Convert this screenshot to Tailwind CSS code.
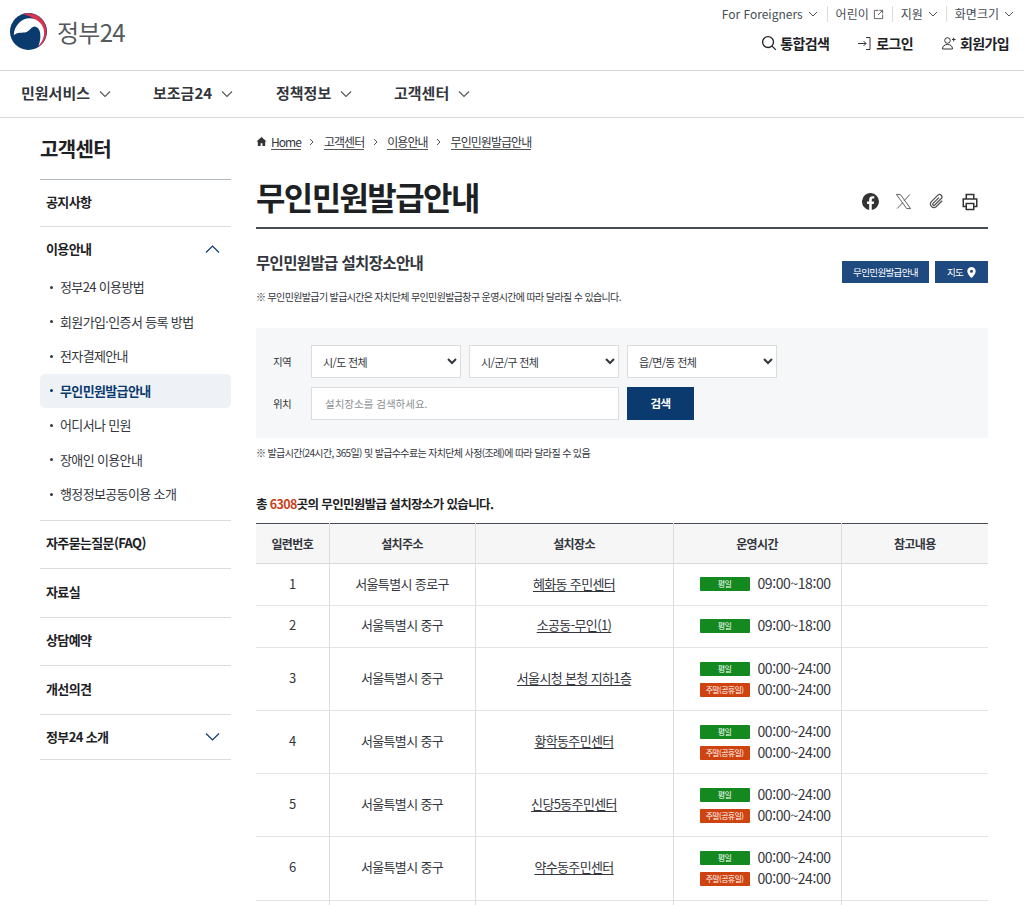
<!DOCTYPE html>
<html lang="ko">
<head>
    <meta charset="UTF-8">
    <meta name="viewport" content="width=device-width, initial-scale=1.0">
    <title>무인민원발급안내 - 정부24</title>
    <script src="https://cdn.jsdelivr.net/npm/@tailwindcss/browser@4"></script>
</head>
<body class="bg-white">
<div class="h-[905px] overflow-hidden font-['Noto_Sans_CJK_KR','Noto_Sans',sans-serif] text-[#1e2124] tracking-[-0.04em]">

    <!-- Top header -->
    <header class="h-[71px] border-b border-[#d6d6d6] flex justify-between pl-[9px] pr-[15px]">
        <div class="flex items-center gap-[9px] pb-[7px]">
            <svg class="w-[39px] h-[39px]" viewBox="0 0 40 40">
                <circle cx="20" cy="20" r="19" fill="#0b3a6e"/>
                <path d="M14 2A19 19 0 0 1 30 36C36 28 36 16 28 9 24 5 18 3 14 2Z" fill="#d9344f"/>
                <path d="M5 24C5 14 13 6.5 21 6.500 29 6.500 36 13 36 21 36 27 33 32 30 35 32 31 32.500 26 32 22 31.500 18 30 15.500 27 15 23 14.500 22 19 18 20.500 14 22 8 20 5 24Z" fill="#fff"/>
            </svg>
            <span class="text-[24px] leading-none text-[#55595e] font-normal tracking-[-0.03em]">정부24</span>
        </div>
        <div class="flex flex-col items-end pt-[6px]">
            <div class="flex items-center -mr-[5px] text-[12px] leading-[16px] text-[#464c53] tracking-normal">
                <span class="flex items-center gap-[5px] pr-[9px] border-r border-[#dcdcdc]">For Foreigners
                    <svg class="w-[10px] h-[10px]" viewBox="0 0 10 10" fill="none" stroke="#555" stroke-width="1"><path d="M1 3l4 4 4-4"/></svg>
                </span>
                <span class="flex items-center gap-[4px] px-[8px] border-r border-[#dcdcdc]">어린이
                    <svg class="w-[11px] h-[11px]" viewBox="0 0 12 12" fill="none" stroke="#555" stroke-width="1"><path d="M6 1.5H1.5v9h9V6M7 1.5h3.5V5M10.5 1.5L5.5 6.5"/></svg>
                </span>
                <span class="flex items-center gap-[5px] px-[8px] border-r border-[#dcdcdc]">지원
                    <svg class="w-[10px] h-[10px]" viewBox="0 0 10 10" fill="none" stroke="#555" stroke-width="1"><path d="M1 3l4 4 4-4"/></svg>
                </span>
                <span class="flex items-center gap-[5px] pl-[8px]">화면크기
                    <svg class="w-[10px] h-[10px]" viewBox="0 0 10 10" fill="none" stroke="#555" stroke-width="1"><path d="M1 3l4 4 4-4"/></svg>
                </span>
            </div>
            <div class="flex items-center gap-[28px] mt-[12px] text-[14px] leading-[18px] font-bold">
                <span class="flex items-center gap-[3px]">
                    <svg class="w-[16px] h-[16px]" viewBox="0 0 17 17" fill="none" stroke="#222" stroke-width="1.4"><circle cx="7.5" cy="7.5" r="5.8"/><path d="M11.8 11.8l4 4"/></svg>
                    통합검색</span>
                <span class="flex items-center gap-[4px]">
                    <svg class="w-[15px] h-[15px]" viewBox="0 0 15 15" fill="none" stroke="#333" stroke-width="1"><path d="M1 7.5h8M6.5 5l2.500 2.500L6.500 10M9 1.500h4v12H9"/></svg>
                    로그인</span>
                <span class="flex items-center gap-[4px]">
                    <svg class="w-[15px] h-[15px]" viewBox="0 0 15 15" fill="none" stroke="#333" stroke-width="1"><circle cx="6.5" cy="4.5" r="2.8"/><path d="M1.5 13c0-3 2-4.500 5-4.500s5 1.500 5 4.500ZM11 3.500h3.500M12.700 1.700v3.600"/></svg>
                    회원가입</span>
            </div>
        </div>
    </header>

    <!-- Main navigation -->
    <nav class="h-[47px] border-b border-[#d6d6d6] flex items-center pl-[21px] pb-[1px] text-[15px] font-bold text-[#33363d] tracking-[0em]">
        <span class="flex items-center gap-[9px] w-[132px]">민원서비스
            <svg class="w-[12px] h-[12px]" viewBox="0 0 12 12" fill="none" stroke="#555" stroke-width="1.1"><path d="M1 3.5l5 5 5-5"/></svg></span>
        <span class="flex items-center gap-[9px] w-[123px]">보조금24
            <svg class="w-[12px] h-[12px]" viewBox="0 0 12 12" fill="none" stroke="#555" stroke-width="1.1"><path d="M1 3.5l5 5 5-5"/></svg></span>
        <span class="flex items-center gap-[9px] w-[118px]">정책정보
            <svg class="w-[12px] h-[12px]" viewBox="0 0 12 12" fill="none" stroke="#555" stroke-width="1.1"><path d="M1 3.5l5 5 5-5"/></svg></span>
        <span class="flex items-center gap-[9px]">고객센터
            <svg class="w-[12px] h-[12px]" viewBox="0 0 12 12" fill="none" stroke="#555" stroke-width="1.1"><path d="M1 3.5l5 5 5-5"/></svg></span>
    </nav>

    <div class="flex pl-[40px] pr-[36px] gap-[25px]">
        <!-- Sidebar -->
        <aside class="w-[191px] shrink-0 pt-[16px]">
            <h2 class="text-[20px] leading-[30px] font-bold text-[#1e2124] pb-[15px] border-b border-[#b1b8be]">고객센터</h2>
            <div class="h-[47px] flex items-center px-[6px] pb-[3px] border-b border-[#dcdcdc] text-[13px] font-bold">공지사항</div>
            <div class="border-b border-[#dcdcdc] pb-[8px]">
                <div class="h-[43px] flex items-center justify-between pt-[1px] pl-[6px] pr-[11px] text-[13px] font-bold">이용안내
                    <svg class="w-[15px] h-[15px]" viewBox="0 0 15 15" fill="none" stroke="#0b3a6e" stroke-width="1.2"><path d="M1 10.5l6.5-6.5 6.5 6.5"/></svg>
                </div>
                <ul class="text-[13px] leading-[18px] text-[#33363d] flex flex-col">
                    <li class="h-[34.5px] flex items-center pl-[10px] gap-[7px]"><i class="w-[3px] h-[3px] rounded-full bg-[#33363d]"></i>정부24 이용방법</li>
                    <li class="h-[34.5px] flex items-center pl-[10px] gap-[7px]"><i class="w-[3px] h-[3px] rounded-full bg-[#33363d]"></i>회원가입·인증서 등록 방법</li>
                    <li class="h-[34.5px] flex items-center pl-[10px] gap-[7px]"><i class="w-[3px] h-[3px] rounded-full bg-[#33363d]"></i>전자결제안내</li>
                    <li class="h-[34.5px] flex items-center pl-[10px] gap-[7px] bg-[#eef2f7] rounded-[5px] font-bold text-[#0b3a6e]"><i class="w-[3px] h-[3px] rounded-full bg-[#0b3a6e]"></i>무인민원발급안내</li>
                    <li class="h-[34.5px] flex items-center pl-[10px] gap-[7px]"><i class="w-[3px] h-[3px] rounded-full bg-[#33363d]"></i>어디서나 민원</li>
                    <li class="h-[34.5px] flex items-center pl-[10px] gap-[7px]"><i class="w-[3px] h-[3px] rounded-full bg-[#33363d]"></i>장애인 이용안내</li>
                    <li class="h-[34.5px] flex items-center pl-[10px] gap-[7px]"><i class="w-[3px] h-[3px] rounded-full bg-[#33363d]"></i>행정정보공동이용 소개</li>
                </ul>
            </div>
            <div class="h-[48.5px] flex items-center px-[6px] pb-[3px] border-b border-[#dcdcdc] text-[13px] font-bold">자주묻는질문(FAQ)</div>
            <div class="h-[48.5px] flex items-center px-[6px] pb-[3px] border-b border-[#dcdcdc] text-[13px] font-bold">자료실</div>
            <div class="h-[48.5px] flex items-center px-[6px] pb-[3px] border-b border-[#dcdcdc] text-[13px] font-bold">상담예약</div>
            <div class="h-[48.5px] flex items-center px-[6px] pb-[3px] border-b border-[#dcdcdc] text-[13px] font-bold">개선의견</div>
            <div class="h-[45px] flex items-center justify-between pl-[6px] pr-[11px] border-b border-[#dcdcdc] text-[13px] font-bold">정부24 소개
                <svg class="w-[15px] h-[15px]" viewBox="0 0 15 15" fill="none" stroke="#0b3a6e" stroke-width="1.2"><path d="M1 4.5l6.5 6.5 6.5-6.5"/></svg>
            </div>
        </aside>

        <!-- Content -->
        <main class="w-[732px] shrink-0">
            <div class="flex items-center h-[50px] pb-[3px] text-[12px] tracking-[-0.08em] text-[#33363d]">
                <svg class="w-[11px] h-[11px] mr-[4px]" viewBox="0 0 12 12" fill="#333"><path d="M6 1L.5 6H2v5h3V8h2v3h3V6h1.5Z"/></svg>
                <span class="border-b border-[#555] leading-[15px]">Home</span>
                <svg class="w-[8px] h-[8px] mx-[7.5px]" viewBox="0 0 8 8" fill="none" stroke="#555"><path d="M2 1l3 3-3 3"/></svg>
                <span class="border-b border-[#555] leading-[15px]">고객센터</span>
                <svg class="w-[8px] h-[8px] mx-[7.5px]" viewBox="0 0 8 8" fill="none" stroke="#555"><path d="M2 1l3 3-3 3"/></svg>
                <span class="border-b border-[#555] leading-[15px]">이용안내</span>
                <svg class="w-[8px] h-[8px] mx-[7.5px]" viewBox="0 0 8 8" fill="none" stroke="#555"><path d="M2 1l3 3-3 3"/></svg>
                <span class="border-b border-[#555] leading-[15px]">무인민원발급안내</span>
            </div>
            <div class="flex justify-between items-center h-[61px] border-b-2 border-[#464c53]">
                <h1 class="text-[32px] leading-[44px] font-bold text-[#1e2124] tracking-[-0.05em] mb-[4px]">무인민원발급안내</h1>
                <div class="flex items-center gap-[16px] pr-[9px] mt-[8px]">
                    <svg class="w-[17px] h-[17px]" viewBox="0 0 24 24" fill="#333"><path d="M24 12a12 12 0 1 0-13.900 11.900v-8.400H7.100V12h3V9.400c0-3 1.800-4.700 4.500-4.700 1.300 0 2.700.2 2.700.2v3h-1.500c-1.500 0-2 .9-2 1.900V12h3.300l-.5 3.500h-2.800v8.400A12 12 0 0 0 24 12Z"/></svg>
                    <svg class="w-[17px] h-[17px]" viewBox="0 0 24 24" fill="none" stroke="#555" stroke-width="1.3"><path d="M2 2h5.500L22 22h-5.500ZM21 2l-8.200 9M11 13.500L3 22"/></svg>
                    <svg class="w-[17px] h-[17px]" viewBox="0 0 24 24" fill="none" stroke="#555" stroke-width="1.8"><path d="M20 11l-8.500 8.500a5 5 0 0 1-7-7L14 3a3.400 3.400 0 0 1 4.800 4.800L9.500 17a1.600 1.600 0 0 1-2.300-2.300L15.500 6.500"/></svg>
                    <svg class="w-[18px] h-[18px]" viewBox="0 0 24 24" fill="none" stroke="#333" stroke-width="2"><path d="M7 8V2h10v6M7 18H3V8h18v10h-4M7 14h10v8H7Z"/></svg>
                </div>
            </div>

            <div class="flex justify-between mt-[22px]">
                <div>
                    <h3 class="text-[15.5px] leading-[22px] font-bold text-[#33363d]">무인민원발급 설치장소안내</h3>
                    <p class="text-[10px] leading-[14px] mt-[17px] text-[#33363d]">※ 무인민원발급기 발급시간은 자치단체 무인민원발급창구 운영시간에 따라 달라질 수 있습니다.</p>
                </div>
                <div class="flex gap-[6px] mt-[10px] h-[22px] text-[9.5px] text-white">
                    <span class="w-[87px] bg-[#1f4a80] flex items-center justify-center">무인민원발급안내</span>
                    <span class="w-[53px] bg-[#1f4a80] flex items-center justify-center gap-[4px]">지도
                        <svg class="w-[9px] h-[11px]" viewBox="0 0 9 11"><path fill="#fff" fill-rule="evenodd" d="M4.500 0a4.200 4.200 0 0 0-4.200 4.200C.3 7 4.500 11 4.500 11s4.200-4 4.200-6.800A4.200 4.200 0 0 0 4.500 0Zm0 2.700a1.500 1.500 0 1 1 0 3 1.500 1.500 0 0 1 0-3Z"/></svg>
                    </span>
                </div>
            </div>

            <!-- Search box -->
            <form class="mt-[24px] h-[110px] bg-[#f6f7f9] pl-[17px] pt-[17px] text-[10.5px] text-[#33363d]">
                <div class="flex items-center">
                    <label class="w-[38px]">지역</label>
                    <select class="w-[150px] h-[33px] bg-white border border-[#dcdcdc] pl-[7px] text-[11px] text-[#33363d]"><option>시/도 전체</option></select>
                    <select class="w-[150px] h-[33px] ml-[8px] bg-white border border-[#dcdcdc] pl-[7px] text-[11px] text-[#33363d]"><option>시/군/구 전체</option></select>
                    <select class="w-[150px] h-[33px] ml-[8px] bg-white border border-[#dcdcdc] pl-[7px] text-[11px] text-[#33363d]"><option>읍/면/동 전체</option></select>
                </div>
                <div class="flex items-center mt-[9px]">
                    <label class="w-[38px]">위치</label>
                    <input class="w-[308px] h-[33px] bg-white border border-[#dcdcdc] px-[13px] text-[10.5px] tracking-normal placeholder-[#8a8f94]" placeholder="설치장소를 검색하세요.">
                    <span class="w-[67px] h-[33px] ml-[8px] bg-[#0b3a6e] text-white text-[11.5px] font-bold flex items-center justify-center">검색</span>
                </div>
            </form>
            <p class="text-[10px] leading-[14px] mt-[8px] text-[#33363d]">※ 발급시간(24시간, 365일) 및 발급수수료는 자치단체 사정(조례)에 따라 달라질 수 있음</p>

            <p class="mt-[35px] text-[12.5px] leading-[18px] font-bold text-[#1e2124]">총 <span class="text-[#c8401c]">6308</span>곳의 무인민원발급 설치장소가 있습니다.</p>

            <!-- Result table -->
            <table class="w-[732px] table-fixed mt-[10px] border-t border-[#464c53] text-[13px] text-[#33363d]">
                <thead>
                    <tr class="h-[40px] bg-[#f6f6f6] text-[12px] font-bold border-b border-[#d9d9d9]">
                        <th class="w-[73px] border-r border-[#dedede]">일련번호</th>
                        <th class="w-[146px] border-r border-[#dedede]">설치주소</th>
                        <th class="w-[198px] border-r border-[#dedede]">설치장소</th>
                        <th class="w-[168px] border-r border-[#dedede]">운영시간</th>
                        <th class="w-[147px]">참고내용</th>
                    </tr>
                </thead>
                <tbody class="text-center">
                    <tr class="h-[42px] border-b border-[#e4e4e4]">
                        <td class="pb-[2px] border-r border-[#dedede]">1</td>
                        <td class="pb-[2px] border-r border-[#dedede]">서울특별시 종로구</td>
                        <td class="pb-[2px] border-r border-[#dedede]"><span class="underline underline-offset-2">혜화동 주민센터</span></td>
                        <td class="pb-[2px] border-r border-[#dedede] pl-[26px]">
                            <div class="flex items-center gap-[8px] h-[21px]"><span class="w-[50px] h-[14px] rounded-[1px] bg-[#14891f] text-white text-[8px] leading-[14px]">평일</span><span class="text-[14px] tracking-[-0.03em]">09:00~18:00</span></div>
                        </td>
                        <td></td>
                    </tr>
                    <tr class="h-[42px] border-b border-[#e4e4e4]">
                        <td class="pb-[3px] border-r border-[#dedede]">2</td>
                        <td class="pb-[3px] border-r border-[#dedede]">서울특별시 중구</td>
                        <td class="pb-[3px] border-r border-[#dedede]"><span class="underline underline-offset-2">소공동-무인(1)</span></td>
                        <td class="pb-[2px] border-r border-[#dedede] pl-[26px]">
                            <div class="flex items-center gap-[8px] h-[21px]"><span class="w-[50px] h-[14px] rounded-[1px] bg-[#14891f] text-white text-[8px] leading-[14px]">평일</span><span class="text-[14px] tracking-[-0.03em]">09:00~18:00</span></div>
                        </td>
                        <td></td>
                    </tr>
                    <tr class="h-[63px] border-b border-[#e4e4e4]">
                        <td class="pb-[2px] border-r border-[#dedede]">3</td>
                        <td class="pb-[2px] border-r border-[#dedede]">서울특별시 중구</td>
                        <td class="pb-[2px] border-r border-[#dedede]"><span class="underline underline-offset-2">서울시청 본청 지하1층</span></td>
                        <td class="border-r border-[#dedede] pl-[26px]">
                            <div class="flex items-center gap-[8px] h-[21px]"><span class="w-[50px] h-[14px] rounded-[1px] bg-[#14891f] text-white text-[8px] leading-[14px]">평일</span><span class="text-[14px] tracking-[-0.03em]">00:00~24:00</span></div>
                            <div class="flex items-center gap-[8px] h-[21px]"><span class="w-[50px] h-[14px] rounded-[1px] bg-[#cf4310] text-white text-[8px] leading-[14px]">주말(공휴일)</span><span class="text-[14px] tracking-[-0.03em]">00:00~24:00</span></div>
                        </td>
                        <td></td>
                    </tr>
                    <tr class="h-[63px] border-b border-[#e4e4e4]">
                        <td class="pb-[2px] border-r border-[#dedede]">4</td>
                        <td class="pb-[2px] border-r border-[#dedede]">서울특별시 중구</td>
                        <td class="pb-[2px] border-r border-[#dedede]"><span class="underline underline-offset-2">황학동주민센터</span></td>
                        <td class="border-r border-[#dedede] pl-[26px]">
                            <div class="flex items-center gap-[8px] h-[21px]"><span class="w-[50px] h-[14px] rounded-[1px] bg-[#14891f] text-white text-[8px] leading-[14px]">평일</span><span class="text-[14px] tracking-[-0.03em]">00:00~24:00</span></div>
                            <div class="flex items-center gap-[8px] h-[21px]"><span class="w-[50px] h-[14px] rounded-[1px] bg-[#cf4310] text-white text-[8px] leading-[14px]">주말(공휴일)</span><span class="text-[14px] tracking-[-0.03em]">00:00~24:00</span></div>
                        </td>
                        <td></td>
                    </tr>
                    <tr class="h-[63px] border-b border-[#e4e4e4]">
                        <td class="pb-[2px] border-r border-[#dedede]">5</td>
                        <td class="pb-[2px] border-r border-[#dedede]">서울특별시 중구</td>
                        <td class="pb-[2px] border-r border-[#dedede]"><span class="underline underline-offset-2">신당5동주민센터</span></td>
                        <td class="border-r border-[#dedede] pl-[26px]">
                            <div class="flex items-center gap-[8px] h-[21px]"><span class="w-[50px] h-[14px] rounded-[1px] bg-[#14891f] text-white text-[8px] leading-[14px]">평일</span><span class="text-[14px] tracking-[-0.03em]">00:00~24:00</span></div>
                            <div class="flex items-center gap-[8px] h-[21px]"><span class="w-[50px] h-[14px] rounded-[1px] bg-[#cf4310] text-white text-[8px] leading-[14px]">주말(공휴일)</span><span class="text-[14px] tracking-[-0.03em]">00:00~24:00</span></div>
                        </td>
                        <td></td>
                    </tr>
                    <tr class="h-[64px] border-b border-[#e4e4e4]">
                        <td class="pb-[3px] border-r border-[#dedede]">6</td>
                        <td class="pb-[3px] border-r border-[#dedede]">서울특별시 중구</td>
                        <td class="pb-[3px] border-r border-[#dedede]"><span class="underline underline-offset-2">약수동주민센터</span></td>
                        <td class="pb-[1px] border-r border-[#dedede] pl-[26px]">
                            <div class="flex items-center gap-[8px] h-[21px]"><span class="w-[50px] h-[14px] rounded-[1px] bg-[#14891f] text-white text-[8px] leading-[14px]">평일</span><span class="text-[14px] tracking-[-0.03em]">00:00~24:00</span></div>
                            <div class="flex items-center gap-[8px] h-[21px]"><span class="w-[50px] h-[14px] rounded-[1px] bg-[#cf4310] text-white text-[8px] leading-[14px]">주말(공휴일)</span><span class="text-[14px] tracking-[-0.03em]">00:00~24:00</span></div>
                        </td>
                        <td></td>
                    </tr>
                    <tr class="h-[42px]">
                        <td class="border-r border-[#dedede]"></td>
                        <td class="border-r border-[#dedede]"></td>
                        <td class="border-r border-[#dedede]"></td>
                        <td class="border-r border-[#dedede]"></td>
                        <td></td>
                    </tr>
                </tbody>
            </table>
        </main>
    </div>
</div>
</body>
</html>
